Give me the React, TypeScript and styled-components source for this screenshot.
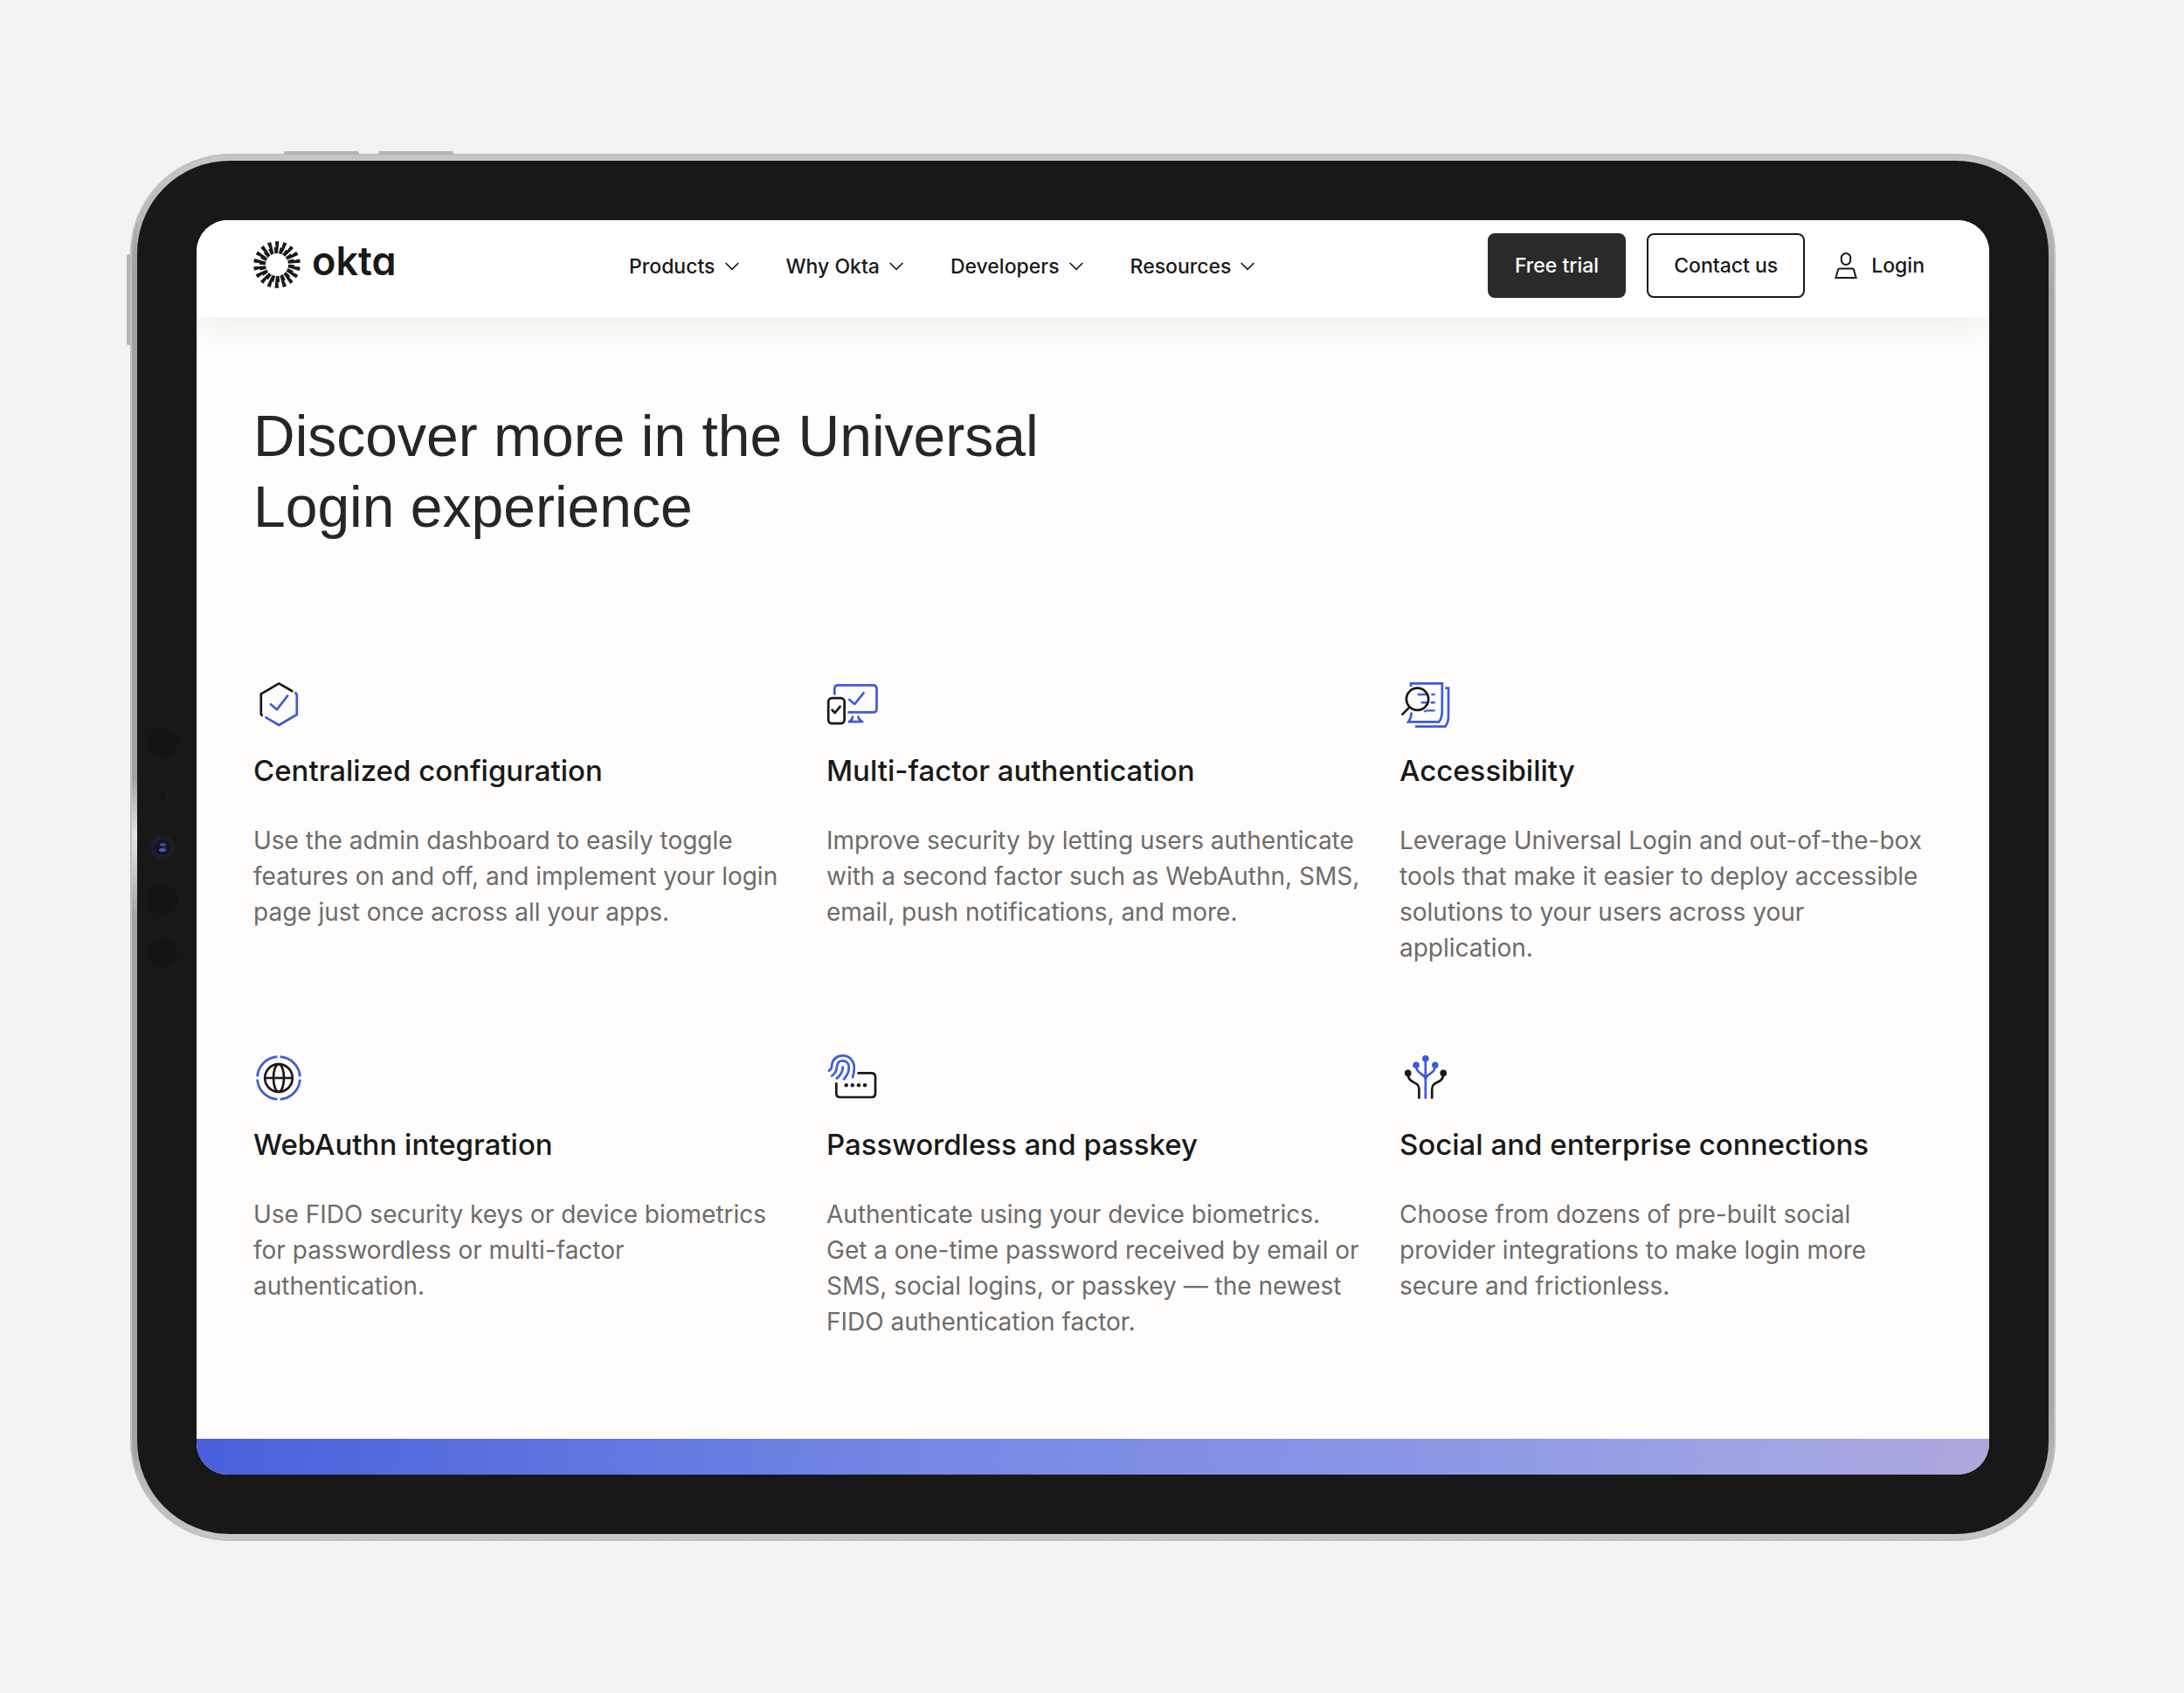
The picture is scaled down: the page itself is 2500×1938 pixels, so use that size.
import React from "react";
import styled, { createGlobalStyle } from "styled-components";

const ink = "#191919";
const blue = "#3f5bdb";

const GlobalStyle = createGlobalStyle`
  *, *::before, *::after { box-sizing: border-box; }
  body {
    margin: 0;
    background: #f3f3f3;
    color: ${ink};
    font-family: Inter, "Liberation Sans", sans-serif;
  }
`;

/* ---------- Tablet ---------- */

const Stage = styled.div`
  display: flex;
  flex-direction: column;
  justify-content: center;
  min-height: 100vh;
  padding: 97px 147px 96px 149px;
`;

const Tablet = styled.div`
  position: relative;
  padding: 8px;
  border-radius: 114px;
  background:
    linear-gradient(#b9bcba, #9fa3a1 8%, #9fa3a1 45%, #e4e4e4 49%, #d0d2d1 51%, #9fa3a1 55%, #9fa3a1 92%, #b9bcba) left / 8px 100% no-repeat,
    linear-gradient(#c6c8c7, #a5a8a6 10%, #a5a8a6 90%, #c6c8c7);
  box-shadow: inset 0 0 0 2px #bfc1c0;
`;

const SideKey = styled.span<{ $edge: "top" | "left"; $offset: number }>`
  position: absolute;
  background: #b4b6b5;
  ${(p) =>
    p.$edge === "top"
      ? `top: -3px; left: ${p.$offset}px; width: 86px; height: 4px; border-radius: 2px 2px 0 0;`
      : `left: -4px; top: ${p.$offset}px; width: 4px; height: 104px; border-radius: 2px 0 0 2px;`}
`;

const Bezel = styled.div`
  display: grid;
  grid-template-columns: 68px minmax(0, 1fr) 68px;
  padding: 68px 0;
  border-radius: 106px;
  background: #181818;
`;

const Sensors = styled.div`
  display: flex;
  flex-direction: column;
  justify-content: center;
  align-items: center;
  padding-right: 10px;
`;

const SensorSlot = styled.span`
  display: flex;
  align-items: center;
  justify-content: center;
  height: 60px;
`;

const Dot = styled.span<{ $size: number }>`
  width: ${(p) => p.$size}px;
  height: ${(p) => p.$size}px;
  border-radius: 50%;
  background: #141414;
`;

const Screen = styled.div`
  grid-column: 2;
  overflow: hidden;
  border-radius: 36px;
  background: #fefdfb;
`;

/* ---------- Header ---------- */

const Header = styled.header`
  display: flex;
  align-items: center;
  justify-content: space-between;
  padding: 15px 74px 22px 65px;
  background: #ffffff;
  box-shadow: 0 10px 40px rgba(40, 40, 20, 0.07);
`;

const Logo = styled.a`
  display: flex;
  align-items: center;
  gap: 13px;
  padding-bottom: 2px;
  color: ${ink};
  text-decoration: none;
`;

const Wordmark = styled.span`
  padding-bottom: 8px;
  font-size: 45px;
  font-weight: 600;
  line-height: 46px;
  font-feature-settings: "cv11";
`;

const Nav = styled.nav`
  display: flex;
  gap: 54px;
  padding-top: 3px;
`;

const NavButton = styled.button`
  display: flex;
  align-items: center;
  gap: 11px;
  padding: 0;
  border: 0;
  background: none;
  color: ${ink};
  font: 500 23px/32px Inter, "Liberation Sans", sans-serif;
  cursor: pointer;
`;

const Actions = styled.div`
  display: flex;
  align-items: center;
  gap: 24px;
`;

const ActionLink = styled.a<{ $solid?: boolean }>`
  display: flex;
  align-items: center;
  height: 74px;
  padding: 0 29px;
  border: 2px solid ${(p) => (p.$solid ? "#2a2a2a" : ink)};
  border-radius: 8px;
  background: ${(p) => (p.$solid ? "#2a2a2a" : "#ffffff")};
  color: ${(p) => (p.$solid ? "#ffffff" : ink)};
  font-size: 23px;
  font-weight: 500;
  text-decoration: none;
`;

const LoginLink = styled.a`
  display: flex;
  align-items: center;
  gap: 16px;
  margin-left: 10px;
  color: ${ink};
  font-size: 23px;
  font-weight: 500;
  text-decoration: none;
`;

/* ---------- Content ---------- */

const Content = styled.main`
  padding: 96px 59px 113px 65px;
`;

const Heading = styled.h1`
  max-width: 980px;
  margin: 0 0 155px;
  color: #262626;
  font-family: "Liberation Sans", Arial, sans-serif;
  font-size: 66px;
  font-weight: 400;
  line-height: 81px;
`;

const Features = styled.div`
  display: grid;
  grid-template-columns: repeat(3, minmax(0, 1fr));
  gap: 98px 40px;
`;

const FeatureIcon = styled.svg`
  display: block;
  width: 60px;
  height: 60px;
  fill: none;
  stroke-linecap: round;
  stroke-linejoin: round;
  stroke-width: 2.7;
`;

const FeatureTitle = styled.h2`
  margin: 24px 0 38px;
  font-size: 33px;
  font-weight: 500;
  line-height: 44px;
`;

const FeatureText = styled.p`
  margin: 0;
  color: #6c6c6a;
  font-size: 28px;
  line-height: 41px;
`;

const Banner = styled.div`
  height: 41px;
  background: linear-gradient(95deg, #4860dc, #7487e4 40%, #8795e6 65%, #a0a4e3 88%, #ada8dd);
`;

/* ---------- Drawings ---------- */

const OktaMark = () => (
  <svg width="54" height="54" viewBox="-27 -27 54 54" fill={ink} aria-hidden="true">
    {Array.from({ length: 18 }, (_, i) => (
      <path
        key={i}
        transform={`rotate(${i * 20})`}
        d="M2.4 -26.4 L1.1 -12.9 Q-.8 -13.3 -2.6 -12.7 L-3.2 -19.6 Q-3.2 -20 -2.8 -20 L-1.5 -20 L-2 -26.4 Q-2 -26.8 -1.6 -26.8 L2 -26.8 Q2.4 -26.8 2.4 -26.4Z"
      />
    ))}
  </svg>
);

const Chevron = () => (
  <svg width="16" height="10" viewBox="0 0 16 10" fill="none" stroke={ink} strokeWidth="1.6" aria-hidden="true">
    <path d="M.7 1 L8 8.4 L15.3 1" />
  </svg>
);

const Person = () => (
  <svg width="26" height="32" viewBox="0 0 26 32" fill="none" stroke={ink} strokeWidth="2" aria-hidden="true">
    <rect x="7.8" y="2" width="10.4" height="13" rx="5.2" />
    <path d="M5.4 19.4 H20.6 Q21.6 19.4 21.9 20.4 L24.6 30 H1.4 L4.1 20.4 Q4.4 19.4 5.4 19.4Z" />
  </svg>
);

const Camera = () => (
  <svg width="28" height="28" viewBox="0 0 28 28" aria-hidden="true">
    <circle cx="14" cy="14" r="14" fill="#1b1e25" />
    <circle cx="14" cy="14" r="8.5" fill="#111522" />
    <ellipse cx="14.5" cy="10.8" rx="3.8" ry="1.9" fill="#37508f" />
    <ellipse cx="14" cy="17" rx="4" ry="2" fill="#4560a8" />
    <circle cx="16" cy="14" r="1.6" fill="#22305f" />
  </svg>
);

const HexagonCheck = () => (
  <FeatureIcon viewBox="0 0 60 60" aria-hidden="true">
    <path stroke={ink} d="M44.3 15 L29.3 6.3 L8.8 18.3 V41.5 L9.8 42.8" />
    <path stroke={blue} d="M48.2 17.3 L49.8 19 V42 L29.3 54 L14.5 45.4 M20 30.3 L26.8 36.3 L39.2 20.5" />
  </FeatureIcon>
);

const Devices = () => (
  <FeatureIcon viewBox="0 0 60 60" aria-hidden="true">
    <path
      stroke={blue}
      d="M9.3 18.5 V12.5 Q9.3 8.3 13.5 8.3 H53.3 Q57.5 8.3 57.5 12.5 V35.2 Q57.5 39.4 53.3 39.4 H25.5 M26.3 25 L32.3 30 L42.5 17.3 M30 44.6 Q29.8 48 26 50.2 H41.2 Q37 48 36.4 44.6"
    />
    <rect stroke={ink} x="2.2" y="23.2" width="18.4" height="28.9" rx="4" />
    <path stroke={ink} d="M6.6 36.8 L9.8 40 L15.6 32.8" />
  </FeatureIcon>
);

const DocumentSearch = () => (
  <FeatureIcon viewBox="0 0 60 60" aria-hidden="true">
    <g stroke={blue} strokeLinecap="butt" strokeLinejoin="miter">
      <path d="M13 10 V6.3 H48.8 V38 Q48.8 45.5 45.3 50.3 H10.2 Q13.6 45.6 13.6 39.5" />
      <path d="M52.3 11.7 H56 V44 Q56 51 52.3 55.7 H18" />
      <path strokeWidth="2.4" d="M20.7 19 H31 M36.3 19 H40.7 M24.7 28.3 H31 M35.6 28.3 H40.7 M28.4 39 Q29.6 37.4 32 37.4 H40.7" />
    </g>
    <circle stroke={ink} cx="20.5" cy="24.3" r="12.6" />
    <path stroke={ink} strokeLinecap="butt" d="M11.6 33.4 L2.6 42.4" />
  </FeatureIcon>
);

const Globe = () => (
  <FeatureIcon viewBox="0 0 60 60" aria-hidden="true">
    <path
      stroke={blue}
      strokeLinecap="butt"
      d="M30.6 5.6 A24.4 24.4 0 0 1 53.4 28.4 M53.4 31.6 A24.4 24.4 0 0 1 30.6 54.4 M27.4 54.4 A24.4 24.4 0 0 1 4.6 31.6 M4.6 28.4 A24.4 24.4 0 0 1 27.4 5.6"
    />
    <g stroke={ink}>
      <circle cx="29" cy="30" r="15.8" />
      <ellipse cx="29" cy="30" rx="6" ry="15.8" />
      <path d="M13.2 30 H44.8" />
    </g>
  </FeatureIcon>
);

const Fingerprint = () => (
  <FeatureIcon viewBox="0 0 60 60" aria-hidden="true">
    <g stroke={blue}>
      <path d="M3 21.6 C5.4 20.5 6 18.5 6.2 15.6 C6.8 8.6 12 4.4 18.7 4.4 C26 4.4 31.6 10 31.8 18 C31.8 22 31.2 26 30 29.2" />
      <path d="M6.3 27.4 C10.6 24.6 11.8 21 12 17 C12.3 12.8 15 10.4 18.8 10.4 C22.8 10.4 25.8 13.4 25.8 17.6 C25.8 23 23.6 27.6 20 31.4" />
      <path d="M11.8 30.4 C16.2 27 18.6 22.6 18.8 17.6" />
    </g>
    <path stroke={ink} d="M36.6 24.4 H51.4 Q56 24.4 56 29 V47.4 Q56 52 51.4 52 H15.9 Q11.3 52 11.3 47.4 V36.4" />
    <g fill={ink}>
      <circle cx="22.7" cy="38.3" r="2.2" />
      <circle cx="29.8" cy="38.3" r="2.2" />
      <circle cx="36.9" cy="38.3" r="2.2" />
      <circle cx="44" cy="38.3" r="2.2" />
    </g>
  </FeatureIcon>
);

const Branches = () => (
  <FeatureIcon viewBox="0 0 60 60" aria-hidden="true">
    <g strokeLinecap="butt">
      <path stroke={blue} d="M29.8 8 V53.8 M19 15.3 C19 26 27.6 23.6 29.8 31 M40.8 15.3 C40.8 26 32 23.6 29.8 31" />
      <path stroke={ink} d="M9.7 24.4 C9.7 38.4 22.4 32 22.4 43 V53.8 M50.2 24.4 C50.2 38.4 37.2 32 37.2 43 V53.8" />
    </g>
    <g fill={blue}>
      <circle cx="29.8" cy="7.8" r="3.8" />
      <circle cx="19" cy="15.3" r="3.8" />
      <circle cx="40.8" cy="15.3" r="3.8" />
    </g>
    <g fill={ink}>
      <circle cx="9.7" cy="24.4" r="3.8" />
      <circle cx="50.2" cy="24.4" r="3.8" />
    </g>
  </FeatureIcon>
);

/* ---------- Data ---------- */

const navItems = ["Products", "Why Okta", "Developers", "Resources"];

const features = [
  {
    Icon: HexagonCheck,
    title: "Centralized configuration",
    text: "Use the admin dashboard to easily toggle features on and off, and implement your login page just once across all your apps.",
  },
  {
    Icon: Devices,
    title: "Multi-factor authentication",
    text: "Improve security by letting users authenticate with a second factor such as WebAuthn, SMS, email, push notifications, and more.",
  },
  {
    Icon: DocumentSearch,
    title: "Accessibility",
    text: "Leverage Universal Login and out-of-the-box tools that make it easier to deploy accessible solutions to your users across your application.",
  },
  {
    Icon: Globe,
    title: "WebAuthn integration",
    text: "Use FIDO security keys or device biometrics for passwordless or multi-factor authentication.",
  },
  {
    Icon: Fingerprint,
    title: "Passwordless and passkey",
    text: "Authenticate using your device biometrics. Get a one-time password received by email or SMS, social logins, or passkey — the newest FIDO authentication factor.",
  },
  {
    Icon: Branches,
    title: "Social and enterprise connections",
    text: "Choose from dozens of pre-built social provider integrations to make login more secure and frictionless.",
  },
];

export default function App() {
  return (
    <>
      <GlobalStyle />
      <Stage>
        <Tablet>
          <SideKey $edge="top" $offset={176} />
          <SideKey $edge="top" $offset={284} />
          <SideKey $edge="left" $offset={115} />
          <Bezel>
            <Sensors>
              <SensorSlot><Dot $size={34} /></SensorSlot>
              <SensorSlot><Dot $size={8} /></SensorSlot>
              <SensorSlot><Camera /></SensorSlot>
              <SensorSlot><Dot $size={34} /></SensorSlot>
              <SensorSlot><Dot $size={34} /></SensorSlot>
            </Sensors>
            <Screen>
              <Header>
                <Logo href="#home">
                  <OktaMark />
                  <Wordmark>okta</Wordmark>
                </Logo>
                <Nav>
                  {navItems.map((item) => (
                    <NavButton key={item} type="button">
                      {item}
                      <Chevron />
                    </NavButton>
                  ))}
                </Nav>
                <Actions>
                  <ActionLink href="#free-trial" $solid>Free trial</ActionLink>
                  <ActionLink href="#contact">Contact us</ActionLink>
                  <LoginLink href="#login">
                    <Person />
                    Login
                  </LoginLink>
                </Actions>
              </Header>
              <Content>
                <Heading>Discover more in the Universal Login experience</Heading>
                <Features>
                  {features.map(({ Icon, title, text }) => (
                    <article key={title}>
                      <Icon />
                      <FeatureTitle>{title}</FeatureTitle>
                      <FeatureText>{text}</FeatureText>
                    </article>
                  ))}
                </Features>
              </Content>
              <Banner />
            </Screen>
          </Bezel>
        </Tablet>
      </Stage>
    </>
  );
}
